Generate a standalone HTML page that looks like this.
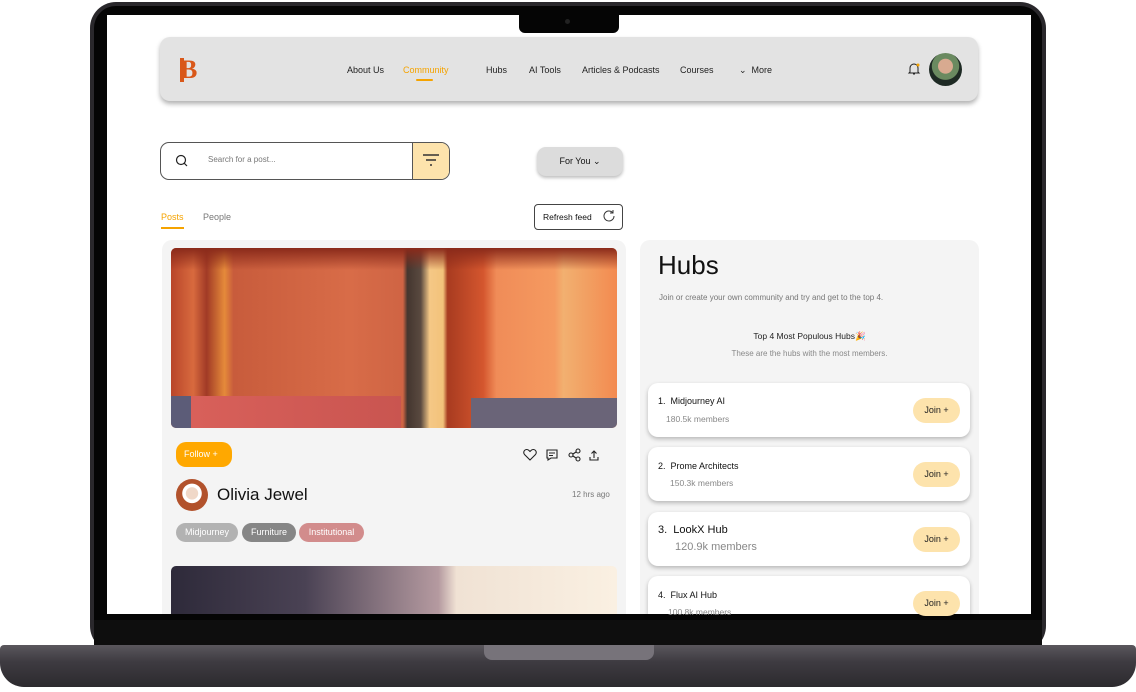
<!DOCTYPE html>
<html><head><meta charset="utf-8"><style>
*{margin:0;padding:0;box-sizing:border-box}
body{width:1136px;height:692px;background:#fff;position:relative;overflow:hidden;font-family:"Liberation Sans",sans-serif;color:#111}
.a{position:absolute}
.nav a{position:absolute;top:65px;font-size:9px;color:#222}
.card{position:absolute;left:648px;width:322px;height:54px;background:#fff;border-radius:10px;box-shadow:0 2px 4px rgba(0,0,0,.25)}
.join{position:absolute;right:10px;top:15px;width:47px;height:25px;border-radius:13px;background:#fde3ac;font-size:9px;text-align:center;line-height:25px;color:#222}
.tag{position:absolute;top:523px;height:19px;border-radius:10px;color:#fff;font-size:9px;line-height:19px;text-align:center}
</style></head><body>
<div class="a" style="left:90px;top:2px;width:956px;height:650px;background:#2a282c;border-radius:26px"></div>
<div class="a" style="left:94px;top:6px;width:948px;height:642px;background:#050505;border-radius:22px"></div>
<div class="a" style="left:94px;top:620px;width:948px;height:28px;background:#0e0e0e"></div>
<div class="a" style="left:0;top:645px;width:1136px;height:42px;background:linear-gradient(#5a575d,#3e3b41 40%,#2c2a2e);border-radius:4px 4px 24px 24px"></div>
<div class="a" style="left:484px;top:645px;width:170px;height:15px;background:#77737a;border-radius:0 0 8px 8px"></div>
<div class="a" style="left:107px;top:15px;width:924px;height:599px;background:#fff;overflow:hidden">
 <div class="a" style="left:412px;top:0;width:100px;height:18px;background:#050505;border-radius:0 0 6px 6px"></div>
 <div class="a" style="left:458px;top:4px;width:5px;height:5px;border-radius:50%;background:#222"></div>
</div>
<div class="a" style="left:160px;top:37px;width:818px;height:64px;background:#e3e3e3;border-radius:10px;box-shadow:0 3px 5px rgba(0,0,0,.3)"></div>
<div class="a" style="left:180px;top:56px;font-weight:bold;font-size:26px;color:#d9581a;font-family:'Liberation Serif',serif;line-height:28px">B</div>
<div class="a" style="left:180px;top:58px;width:4px;height:24px;background:#d9581a"></div>
<div class="nav">
<a style="left:347px">About Us</a>
<a style="left:403px;color:#f5a300">Community</a>
<a style="left:486px">Hubs</a>
<a style="left:529px">AI Tools</a>
<a style="left:582px">Articles &amp; Podcasts</a>
<a style="left:680px">Courses</a>
<a style="left:739px">&#8964;&nbsp; More</a>
</div>
<div class="a" style="left:416px;top:79px;width:17px;height:2px;background:#f5a300;border-radius:1px"></div>
<svg class="a" style="left:907px;top:62px" width="14" height="14" viewBox="0 0 14 14"><path d="M3 10V6a4 4 0 018 0v4l1 1H2zM6 12h2" fill="none" stroke="#222" stroke-width="1"/><circle cx="11" cy="3" r="1.5" fill="#f5a300"/></svg>
<div class="a" style="left:929px;top:53px;width:33px;height:33px;border-radius:50%;background:radial-gradient(circle at 50% 40%,#d8aa90 0 28%,#6a8a60 30% 52%,#1e2a24 54%)"></div>
<div class="a" style="left:160px;top:142px;width:290px;height:38px;border:1px solid #555;border-radius:9px;overflow:hidden">
 <div class="a" style="right:0;top:0;width:37px;height:38px;background:#fde3ac;border-left:1px solid #555"></div>
</div>
<svg class="a" style="left:175px;top:154px" width="13" height="13" viewBox="0 0 13 13"><circle cx="6" cy="6" r="4.5" fill="none" stroke="#222" stroke-width="1.2"/><path d="M9.3 9.3L12 12" stroke="#222" stroke-width="1.2"/></svg>
<div class="a" style="left:208px;top:155px;font-size:8px;color:#777">Search for a post...</div>
<svg class="a" style="left:422px;top:152px" width="18" height="16" viewBox="0 0 18 16"><path d="M1 3h16M4 8h10M8 13h2" stroke="#333" stroke-width="1.5"/></svg>
<div class="a" style="left:537px;top:147px;width:86px;height:29px;background:#dcdcdc;border-radius:9px;box-shadow:0 2px 3px rgba(0,0,0,.25);font-size:9px;text-align:center;line-height:29px">For You &#8964;</div>
<div class="a" style="left:161px;top:212px;font-size:9px;color:#f5a300">Posts</div>
<div class="a" style="left:161px;top:227px;width:23px;height:2px;background:#f5a300"></div>
<div class="a" style="left:203px;top:212px;font-size:9px;color:#777">People</div>
<div class="a" style="left:534px;top:204px;width:89px;height:26px;border:1px solid #444;border-radius:4px;font-size:8.5px;line-height:24px;padding-left:8px">Refresh feed</div>
<svg class="a" style="left:602px;top:209px" width="14" height="14" viewBox="0 0 14 14"><path d="M12 7a5 5 0 11-1.5-3.6M11 1v3H8" fill="none" stroke="#333" stroke-width="1"/></svg>
<div class="a" style="left:162px;top:240px;width:464px;height:374px;background:#f4f4f4;border-radius:10px 10px 0 0"></div>
<div class="a" style="left:171px;top:248px;width:446px;height:180px;border-radius:5px;overflow:hidden;background:linear-gradient(90deg,#b8452a 0%,#d86a3e 5%,#a13a26 8%,#e58a3a 12%,#c85c3c 14%,#d86c48 40%,#cf6444 52%,#44362f 53%,#5a4a40 56%,#f5c886 58%,#f2c27a 61%,#a83b20 62%,#d4562e 70%,#f08c58 73%,#f59a60 86%,#f2b070 88%,#f38a50 100%)">
 <div class="a" style="left:0;top:0;width:446px;height:22px;background:linear-gradient(#8a2a1a,rgba(150,40,20,0))"></div>
 <div class="a" style="left:0;top:148px;width:230px;height:32px;background:linear-gradient(90deg,#5c5c78 0,#5c5c78 20px,#d8605a 20px,#c95550)"></div>
 <div class="a" style="left:300px;top:150px;width:146px;height:30px;background:#6a6478"></div>
</div>
<div class="a" style="left:176px;top:442px;width:56px;height:25px;background:#ffa800;border-radius:10px;color:#fff;font-size:9px;line-height:25px;padding-left:8px">Follow +</div>
<svg class="a" style="left:522px;top:447px" width="86" height="16" viewBox="0 0 86 16" fill="none" stroke="#222" stroke-width="1.1"><path d="M8 13L2.5 7.5a3 3 0 014.5-4l1 1 1-1a3 3 0 014.5 4z"/><path d="M25 3h10v8h-6l-3 2v-2h-1zM27 6h6M27 8.5h4"/><circle cx="49" cy="8" r="2"/><circle cx="56" cy="4" r="2"/><circle cx="56" cy="12" r="2"/><path d="M51 7l3-2M51 9l3 2"/><path d="M72 4v7M69.5 6.5L72 4l2.5 2.5M68 10v3h8v-3"/></svg>
<div class="a" style="left:176px;top:479px;width:32px;height:32px;border-radius:50%;background:radial-gradient(circle at 50% 45%,#f0d8c8 0 25%,#fff 27% 40%,#b2522c 42%)"></div>
<div class="a" style="left:217px;top:485px;font-size:17px;color:#111">Olivia Jewel</div>
<div class="a" style="left:572px;top:490px;font-size:8px;color:#777">12 hrs ago</div>
<div class="tag" style="left:176px;width:62px;background:#b2b2b2">Midjourney</div>
<div class="tag" style="left:242px;width:54px;background:#868686">Furniture</div>
<div class="tag" style="left:299px;width:65px;background:#d28c8c">Institutional</div>
<div class="a" style="left:171px;top:566px;width:446px;height:48px;border-radius:5px 5px 0 0;background:linear-gradient(90deg,#2e2a3a 0%,#4a4254 30%,#b59aa0 60%,#f0e2d4 64%,#faf0e2 100%)"></div>
<div class="a" style="left:640px;top:240px;width:339px;height:374px;background:#f4f4f4;border-radius:10px 10px 0 0"></div>
<div class="a" style="left:658px;top:250px;font-size:26px;color:#111">Hubs</div>
<div class="a" style="left:659px;top:293px;font-size:8px;color:#777">Join or create your own community and try and get to the top 4.</div>
<div class="a" style="left:640px;width:339px;top:331px;font-size:8.5px;text-align:center;color:#222">Top 4 Most Populous Hubs🎉</div>
<div class="a" style="left:640px;width:339px;top:349px;font-size:8px;text-align:center;color:#888">These are the hubs with the most members.</div>
<div class="card" style="top:383px"><div class="a" style="left:10px;top:13px;font-size:9px">1.&nbsp; Midjourney AI</div><div class="a" style="left:18px;top:31px;font-size:8.5px;color:#888">180.5k members</div><div class="join">Join +</div></div>
<div class="card" style="top:447px"><div class="a" style="left:10px;top:14px;font-size:9px">2.&nbsp; Prome Architects</div><div class="a" style="left:22px;top:31px;font-size:8.5px;color:#888">150.3k members</div><div class="join">Join +</div></div>
<div class="card" style="top:512px"><div class="a" style="left:10px;top:12px;font-size:11px">3.&nbsp; LookX Hub</div><div class="a" style="left:27px;top:29px;font-size:11px;color:#888">120.9k members</div><div class="join">Join +</div></div>
<div class="card" style="top:576px;height:38px;border-radius:10px 10px 0 0"><div class="a" style="left:10px;top:14px;font-size:9px">4.&nbsp; Flux AI Hub</div><div class="a" style="left:20px;top:31px;font-size:8.5px;color:#888">100.8k members</div><div class="join">Join +</div></div>
</body></html>
